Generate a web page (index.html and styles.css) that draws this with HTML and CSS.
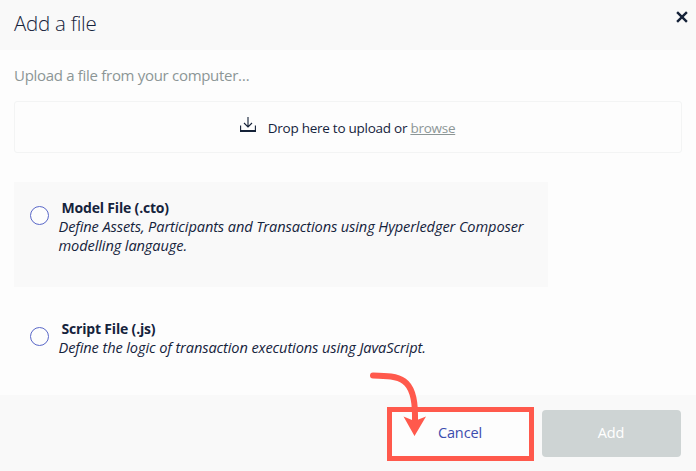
FILE: index.html
```html
<!DOCTYPE html>
<html lang="en">
<head>
<meta charset="utf-8">
<title>Add a file</title>
<link rel="stylesheet" href="styles.css">
</head>
<body>
<div class="modal">
  <header class="modal-header">
    <h1 class="title">Add a file</h1>
    <button class="close" aria-label="Close"><svg width="14" height="14" viewBox="0 0 14 14"><path d="M2.1 2.1 11.9 11.9M11.9 2.1 2.1 11.9"/></svg></button>
  </header>
  <main class="modal-body">
    <p class="prompt">Upload a file from your computer…</p>
    <div class="dropzone">
      <svg class="upload-icon" width="18" height="18" viewBox="0 0 18 18"><path d="M9 1v10M5 7l4 4 4-4"/><path d="M1.6 9.5V15h14.8V9.5" /><path class="tray" d="M1 15h16"/></svg>
      <span class="drop-text">Drop here to upload or <a class="browse">browse</a></span>
    </div>
    <label class="option option-shaded">
      <span class="radio"></span>
      <span class="option-text"><b class="option-name">Model File (.cto)</b><i class="option-desc">Define Assets, Participants and Transactions using Hyperledger Composer<br>modelling langauge.</i></span>
    </label>
    <label class="option">
      <span class="radio"></span>
      <span class="option-text"><b class="option-name">Script File (.js)</b><i class="option-desc">Define the logic of transaction executions using JavaScript.</i></span>
    </label>
  </main>
  <footer class="modal-footer">
    <button class="btn cancel">Cancel</button>
    <button class="btn add">Add</button>
  </footer>
  <svg class="pointer" width="62" height="72" viewBox="0 0 62 72"><path class="shaft" d="M5 7.500C32 8 47 9 47 47V57"/><path class="head" d="M35.500 48.500 46.500 53 58 48.500 46.500 68Z"/></svg>
</div>
</body>
</html>
```
FILE: styles.css
```css
* { box-sizing: border-box; }
body { margin: 0; font-family: "Open Sans", sans-serif; color: #15233c; }
button { font: inherit; border: 0; padding: 0; }
.modal { position: relative; display: flex; flex-direction: column; width: 696px; height: 471px; background: #fdfdfd; overflow: hidden; }
.modal-header { display: flex; justify-content: space-between; align-items: flex-start; height: 50px; padding: 10px 7px 0 14px; background: #f9f9f9; }
.title { margin: 0; font-size: 20.5px; line-height: 26px; font-weight: 300; letter-spacing: -0.25px; }
.close { height: 14px; background: none; }
.close svg { display: block; }
.close path { fill: none; stroke: #152238; stroke-width: 2.4; }
.modal-body { flex: none; height: 345px; padding: 14px 14px 0; }
.prompt { margin: 0; height: 37px; font-size: 15px; line-height: 22px; letter-spacing: -0.3px; color: #8c9696; }
.dropzone { display: flex; justify-content: center; align-items: center; gap: 11px; width: 668px; height: 52px; margin-bottom: 29px; padding-right: 2px; border: 1px solid #f3f4f4; border-radius: 3px; font-size: 13.5px; letter-spacing: -0.26px; }
.upload-icon { margin-top: -4px; fill: none; stroke: #152238; stroke-width: 1.1; }
.tray { stroke-width: 2; }
.drop-text { line-height: 20px; padding-top: 2px; }
.browse { color: #8c9696; text-decoration: underline; }
.option { display: flex; gap: 10px; width: 534px; height: 105px; padding: 16px 16px 0; margin-bottom: 16px; }
.option-shaded { background: #f9f9f9; }
.radio { flex: none; width: 19px; height: 19px; margin-top: 7.5px; border: 1px solid #5a68c8; border-radius: 50%; background: #fdfdfd; }
.option-text { display: flex; flex-direction: column; white-space: nowrap; margin-left: -0.5px; font-size: 14.6px; line-height: 19px; }
.option-name { padding-left: 3px; font-size: 14px; letter-spacing: -0.18px; }
.option-desc { letter-spacing: -0.11px; }
.modal-footer { display: flex; justify-content: flex-end; gap: 8px; height: 76px; padding: 12px 15px 0 0; background: #f9f9f9; }
.btn { padding: 0 1px 3px 0; font-size: 14.5px; letter-spacing: -0.1px; }
.cancel { width: 147px; height: 54px; border: 5px solid #ff594c; background: #fdfdfd; color: #3c4cae; }
.add { width: 139px; height: 47px; margin-top: 3px; border-radius: 4px; background: #ced4d4; color: #fff; }
.pointer { position: absolute; left: 368px; top: 368px; }
.shaft { fill: none; stroke: #ff594c; stroke-width: 6; stroke-linecap: round; }
.head { fill: #ff594c; }
```
